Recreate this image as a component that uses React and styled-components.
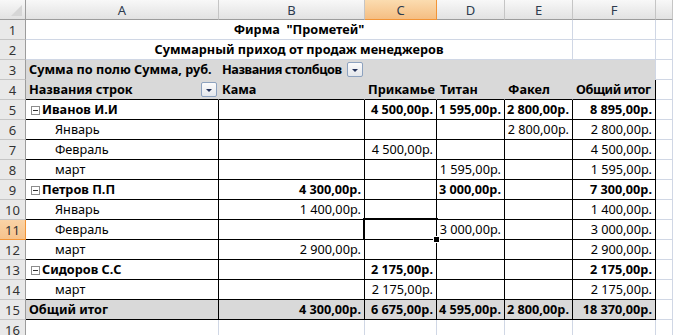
import React from 'react';
import styled, { createGlobalStyle, css } from 'styled-components';

const GRID = '#d0d7e5';
const PIV = '#d9d9d9';
const BLACK = '#000';
const COLS = '26px 193px 146px 72px 68px 68px 83px 1fr';

const Global = createGlobalStyle`
  html, body { margin: 0; padding: 0; background: #fff; }
  body { font-family: "Noto Sans", "Liberation Sans", sans-serif; font-size: 12.7px; color: #000; }
`;

const Sheet = styled.div`
  width: 673px;
  height: 335px;
  overflow: hidden;
  display: flex;
  flex-direction: column;
`;

const Row = styled.div`
  display: grid;
  grid-template-columns: ${COLS};
  height: 20px;
  flex: none;
`;

const headGrad = css`
  background: linear-gradient(#f8f8f8, #e2e2e2);
`;

const Corner = styled.div`
  box-sizing: border-box;
  ${headGrad};
  border-right: 1px solid #9c9c9c;
  border-bottom: 1px solid #9c9c9c;
  display: flex;
  align-items: flex-end;
  justify-content: flex-end;
  padding: 0 3px 3px 0;
`;

const CornerTri = styled.div`
  width: 0;
  height: 0;
  border-left: 11px solid transparent;
  border-bottom: 11px solid #d6d6d6;
`;

const ColHead = styled.div`
  box-sizing: border-box;
  ${p => p.$active
    ? css`background: linear-gradient(#fbdcb0, #f5be82); border-right: 1px solid #f29436; border-bottom: 1px solid #f29436;`
    : css`${headGrad}; border-right: 1px solid #c5c5c5; border-bottom: 1px solid #9c9c9c;`}
  display: flex;
  align-items: center;
  justify-content: center;
  font-size: 13px;
  color: #2d3b4e;
  padding-top: 1px;
`;

const RowHead = styled.div`
  box-sizing: border-box;
  background: ${p => (p.$active ? 'linear-gradient(#fad3a6, #f6c38c)' : '#e9e9e9')};
  border-right: 1px solid ${p => (p.$active ? '#f29436' : '#9c9c9c')};
  border-bottom: 1px solid ${p => (p.$active ? '#f29436' : '#c5c5c5')};
  display: flex;
  align-items: center;
  justify-content: center;
  font-size: 13px;
  color: #333;
`;

const Cell = styled.div`
  box-sizing: border-box;
  grid-column: span ${p => p.$span || 1};
  display: flex;
  align-items: flex-end;
  justify-content: ${p => (p.$align === 'right' ? 'flex-end' : p.$align === 'center' ? 'center' : 'flex-start')};
  gap: 2px;
  padding: 0 3px 1px ${p => (p.$indent != null ? p.$indent : 3)}px;
  background: ${p => p.$bg || '#fff'};
  border-right: 1px solid ${p => p.$rc || GRID};
  border-bottom: 1px solid ${p => p.$bc || GRID};
  font-weight: ${p => (p.$bold ? 700 : 400)};
  white-space: nowrap;
  line-height: 17px;
  position: relative;
  ${p => p.$selected && css`
    &::after {
      content: '';
      position: absolute;
      left: -2px;
      top: -2px;
      right: -2px;
      bottom: -2px;
      border: 2px solid #000;
      pointer-events: none;
    }
    &::before {
      content: '';
      position: absolute;
      right: -4px;
      bottom: -4px;
      width: 5px;
      height: 5px;
      background: #000;
      border: 1px solid #fff;
      z-index: 2;
    }
  `}
`;

const Label = styled.span`
  flex: none;
  letter-spacing: ${p => (p.$tight ? '-0.45px' : 'normal')};
`;

const DropBtn = styled.span`
  box-sizing: border-box;
  flex: none;
  width: 16px;
  height: 15px;
  margin-left: auto;
  margin-right: -2px;
  margin-bottom: 1px;
  border: 1px solid #8da2bf;
  border-radius: 2px;
  background: linear-gradient(#fbfbfb, #e4e7ec);
  display: flex;
  align-items: center;
  justify-content: center;
`;

const Tri = styled.span`
  width: 0;
  height: 0;
  border-left: 3px solid transparent;
  border-right: 3px solid transparent;
  border-top: 3px solid #24325a;
  margin-top: 1px;
`;

const Toggle = styled.span`
  box-sizing: border-box;
  flex: none;
  width: 9px;
  height: 9px;
  border: 1px solid #8c8c8c;
  background: #fff;
  align-self: center;
  margin-top: 2px;
  display: flex;
  align-items: center;
  justify-content: center;
  &::after {
    content: '';
    width: 5px;
    height: 1px;
    background: #333;
  }
`;

const letters = ['A', 'B', 'C', 'D', 'E', 'F', ''];

const data = [
  { type: 'name', name: 'Иванов И.И', v: ['', '4 500,00р.', '1 595,00р.', '2 800,00р.', '8 895,00р.'] },
  { type: 'm', name: 'Январь', v: ['', '', '', '2 800,00р.', '2 800,00р.'] },
  { type: 'm', name: 'Февраль', v: ['', '4 500,00р.', '', '', '4 500,00р.'] },
  { type: 'm', name: 'март', v: ['', '', '1 595,00р.', '', '1 595,00р.'] },
  { type: 'name', name: 'Петров П.П', v: ['4 300,00р.', '', '3 000,00р.', '', '7 300,00р.'] },
  { type: 'm', name: 'Январь', v: ['1 400,00р.', '', '', '', '1 400,00р.'] },
  { type: 'm', name: 'Февраль', v: ['', '', '3 000,00р.', '', '3 000,00р.'], sel: 1 },
  { type: 'm', name: 'март', v: ['2 900,00р.', '', '', '', '2 900,00р.'] },
  { type: 'name', name: 'Сидоров С.С', v: ['', '2 175,00р.', '', '', '2 175,00р.'] },
  { type: 'm', name: 'март', v: ['', '2 175,00р.', '', '', '2 175,00р.'] },
  { type: 'total', name: 'Общий итог', v: ['4 300,00р.', '6 675,00р.', '4 595,00р.', '2 800,00р.', '18 370,00р.'] },
];

const heads = ['Кама', 'Прикамье', 'Титан', 'Факел', 'Общий итог'];

export default function App() {
  return (
    <Sheet>
      <Global />
      <Row>
        <Corner><CornerTri /></Corner>
        {letters.map((l, i) => (
          <ColHead key={i} $active={l === 'C'}>{l}</ColHead>
        ))}
      </Row>

      <Row>
        <RowHead>1</RowHead>
        <Cell $span={5} $align="center" $bold>Фирма&nbsp; "Прометей"</Cell>
        <Cell />
        <Cell />
      </Row>
      <Row>
        <RowHead>2</RowHead>
        <Cell $span={5} $align="center" $bold>Суммарный приход от продаж менеджеров</Cell>
        <Cell />
        <Cell />
      </Row>

      <Row>
        <RowHead>3</RowHead>
        <Cell $bg={PIV} $rc={PIV} $bc={PIV} $bold>Сумма по полю Сумма, руб.</Cell>
        <Cell $bg={PIV} $rc={PIV} $bc={PIV} $bold>
          <Label $tight>Названия столбцов</Label>
          <DropBtn><Tri /></DropBtn>
        </Cell>
        <Cell $bg={PIV} $rc={PIV} $bc={PIV} />
        <Cell $bg={PIV} $rc={PIV} $bc={PIV} />
        <Cell $bg={PIV} $rc={PIV} $bc={PIV} />
        <Cell $bg={PIV} $bc={PIV} />
        <Cell />
      </Row>

      <Row>
        <RowHead>4</RowHead>
        <Cell $bg={PIV} $rc={PIV} $bc={BLACK} $bold>
          <Label>Названия строк</Label>
          <DropBtn><Tri /></DropBtn>
        </Cell>
        {heads.map((h, i) => (
          <Cell key={h} $bg={PIV} $rc={i === 4 ? BLACK : PIV} $bc={BLACK} $bold>
            <Label $tight={i === 4}>{h}</Label>
          </Cell>
        ))}
        <Cell />
      </Row>

      {data.map((r, idx) => {
        const n = idx + 5;
        const bold = r.type !== 'm';
        const bg = r.type === 'total' ? PIV : '#fff';
        return (
          <Row key={n}>
            <RowHead $active={n === 11}>{n}</RowHead>
            <Cell $bg={bg} $rc={BLACK} $bc={BLACK} $bold={bold} $indent={r.type === 'm' ? 29 : r.type === 'name' ? 5 : 3}>
              {r.type === 'name' && <Toggle />}
              <Label>{r.name}</Label>
            </Cell>
            {r.v.map((v, j) => (
              <Cell key={j} $bg={bg} $rc={BLACK} $bc={BLACK} $bold={bold} $align="right" $selected={r.sel === 1 && j === 1}>
                {v}
              </Cell>
            ))}
            <Cell />
          </Row>
        );
      })}

      <Row>
        <RowHead>16</RowHead>
        <Cell /><Cell /><Cell /><Cell /><Cell /><Cell /><Cell />
      </Row>
    </Sheet>
  );
}
